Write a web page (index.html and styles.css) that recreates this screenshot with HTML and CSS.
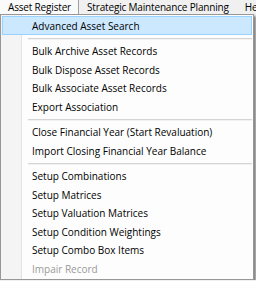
FILE: index.html
```html
<!DOCTYPE html>
<html lang="en">
<head>
  <meta charset="UTF-8">
  <meta name="viewport" content="width=device-width, initial-scale=1.0">
  <title>Asset Register Menu</title>
  <link rel="stylesheet" href="styles.css">
</head>
<body>
  <div class="menubar">
    <span class="menu-title open">Asset Register</span>
    <span class="menu-title">Strategic Maintenance Planning</span>
    <span class="menu-title">Help</span>
  </div>

  <ul class="dropdown">
    <li class="item active">Advanced Asset Search</li>
    <li class="sep"></li>
    <li class="item">Bulk Archive Asset Records</li>
    <li class="item">Bulk Dispose Asset Records</li>
    <li class="item">Bulk Associate Asset Records</li>
    <li class="item">Export Association</li>
    <li class="sep"></li>
    <li class="item">Close Financial Year (Start Revaluation)</li>
    <li class="item">Import Closing Financial Year Balance</li>
    <li class="sep"></li>
    <li class="item">Setup Combinations</li>
    <li class="item">Setup Matrices</li>
    <li class="item">Setup Valuation Matrices</li>
    <li class="item">Setup Condition Weightings</li>
    <li class="item">Setup Combo Box Items</li>
    <li class="item disabled">Impair Record</li>
  </ul>
</body>
</html>
```

FILE: styles.css
```css
body {
  margin: 0;
  font-family: 'Open Sans', 'Noto Sans', sans-serif;
  font-size: 10px;
  color: #000;
  background: #f0f0f0;
  width: 256px;
  overflow: hidden;
}
.menubar {
  display: flex;
  height: 14px;
  background: #f0f0f0;
  white-space: nowrap;
  overflow: hidden;
  letter-spacing: -0.17px;
}
.menu-title {
  padding: 0 8px;
  line-height: 14px;
}
.menu-title.open {
  background: #fafafa;
  border-right: 1px solid #a0a0a0;
  padding-right: 7px;
}
.dropdown {
  list-style: none;
  margin: 0;
  padding: 1px;
  width: 250px;
  border: 1px solid #979797;
  background: linear-gradient(to right, #f4f4f4 0 20px, #e3e3e3 20px 21px, #fdfdfd 21px);
  box-shadow: 2px 2px 2px rgba(0, 0, 0, 0.45);
}
.item {
  height: 18.5px;
  box-sizing: border-box;
  display: flex;
  align-items: center;
  padding-left: 29px;
  padding-top: 1px;
  border: 1px solid transparent;
  white-space: nowrap;
}
.item.active {
  background: #cce8ff;
  border-color: #99d1ff;
}
.item.disabled {
  color: #9a9a9a;
}
.sep {
  height: 7px;
  box-sizing: border-box;
  padding-top: 3px;
  margin-left: 26px;
}
.sep::before {
  content: '';
  display: block;
  height: 1px;
  background: #d5d5d5;
  border-bottom: 1px solid #f2f2f2;
}
```
